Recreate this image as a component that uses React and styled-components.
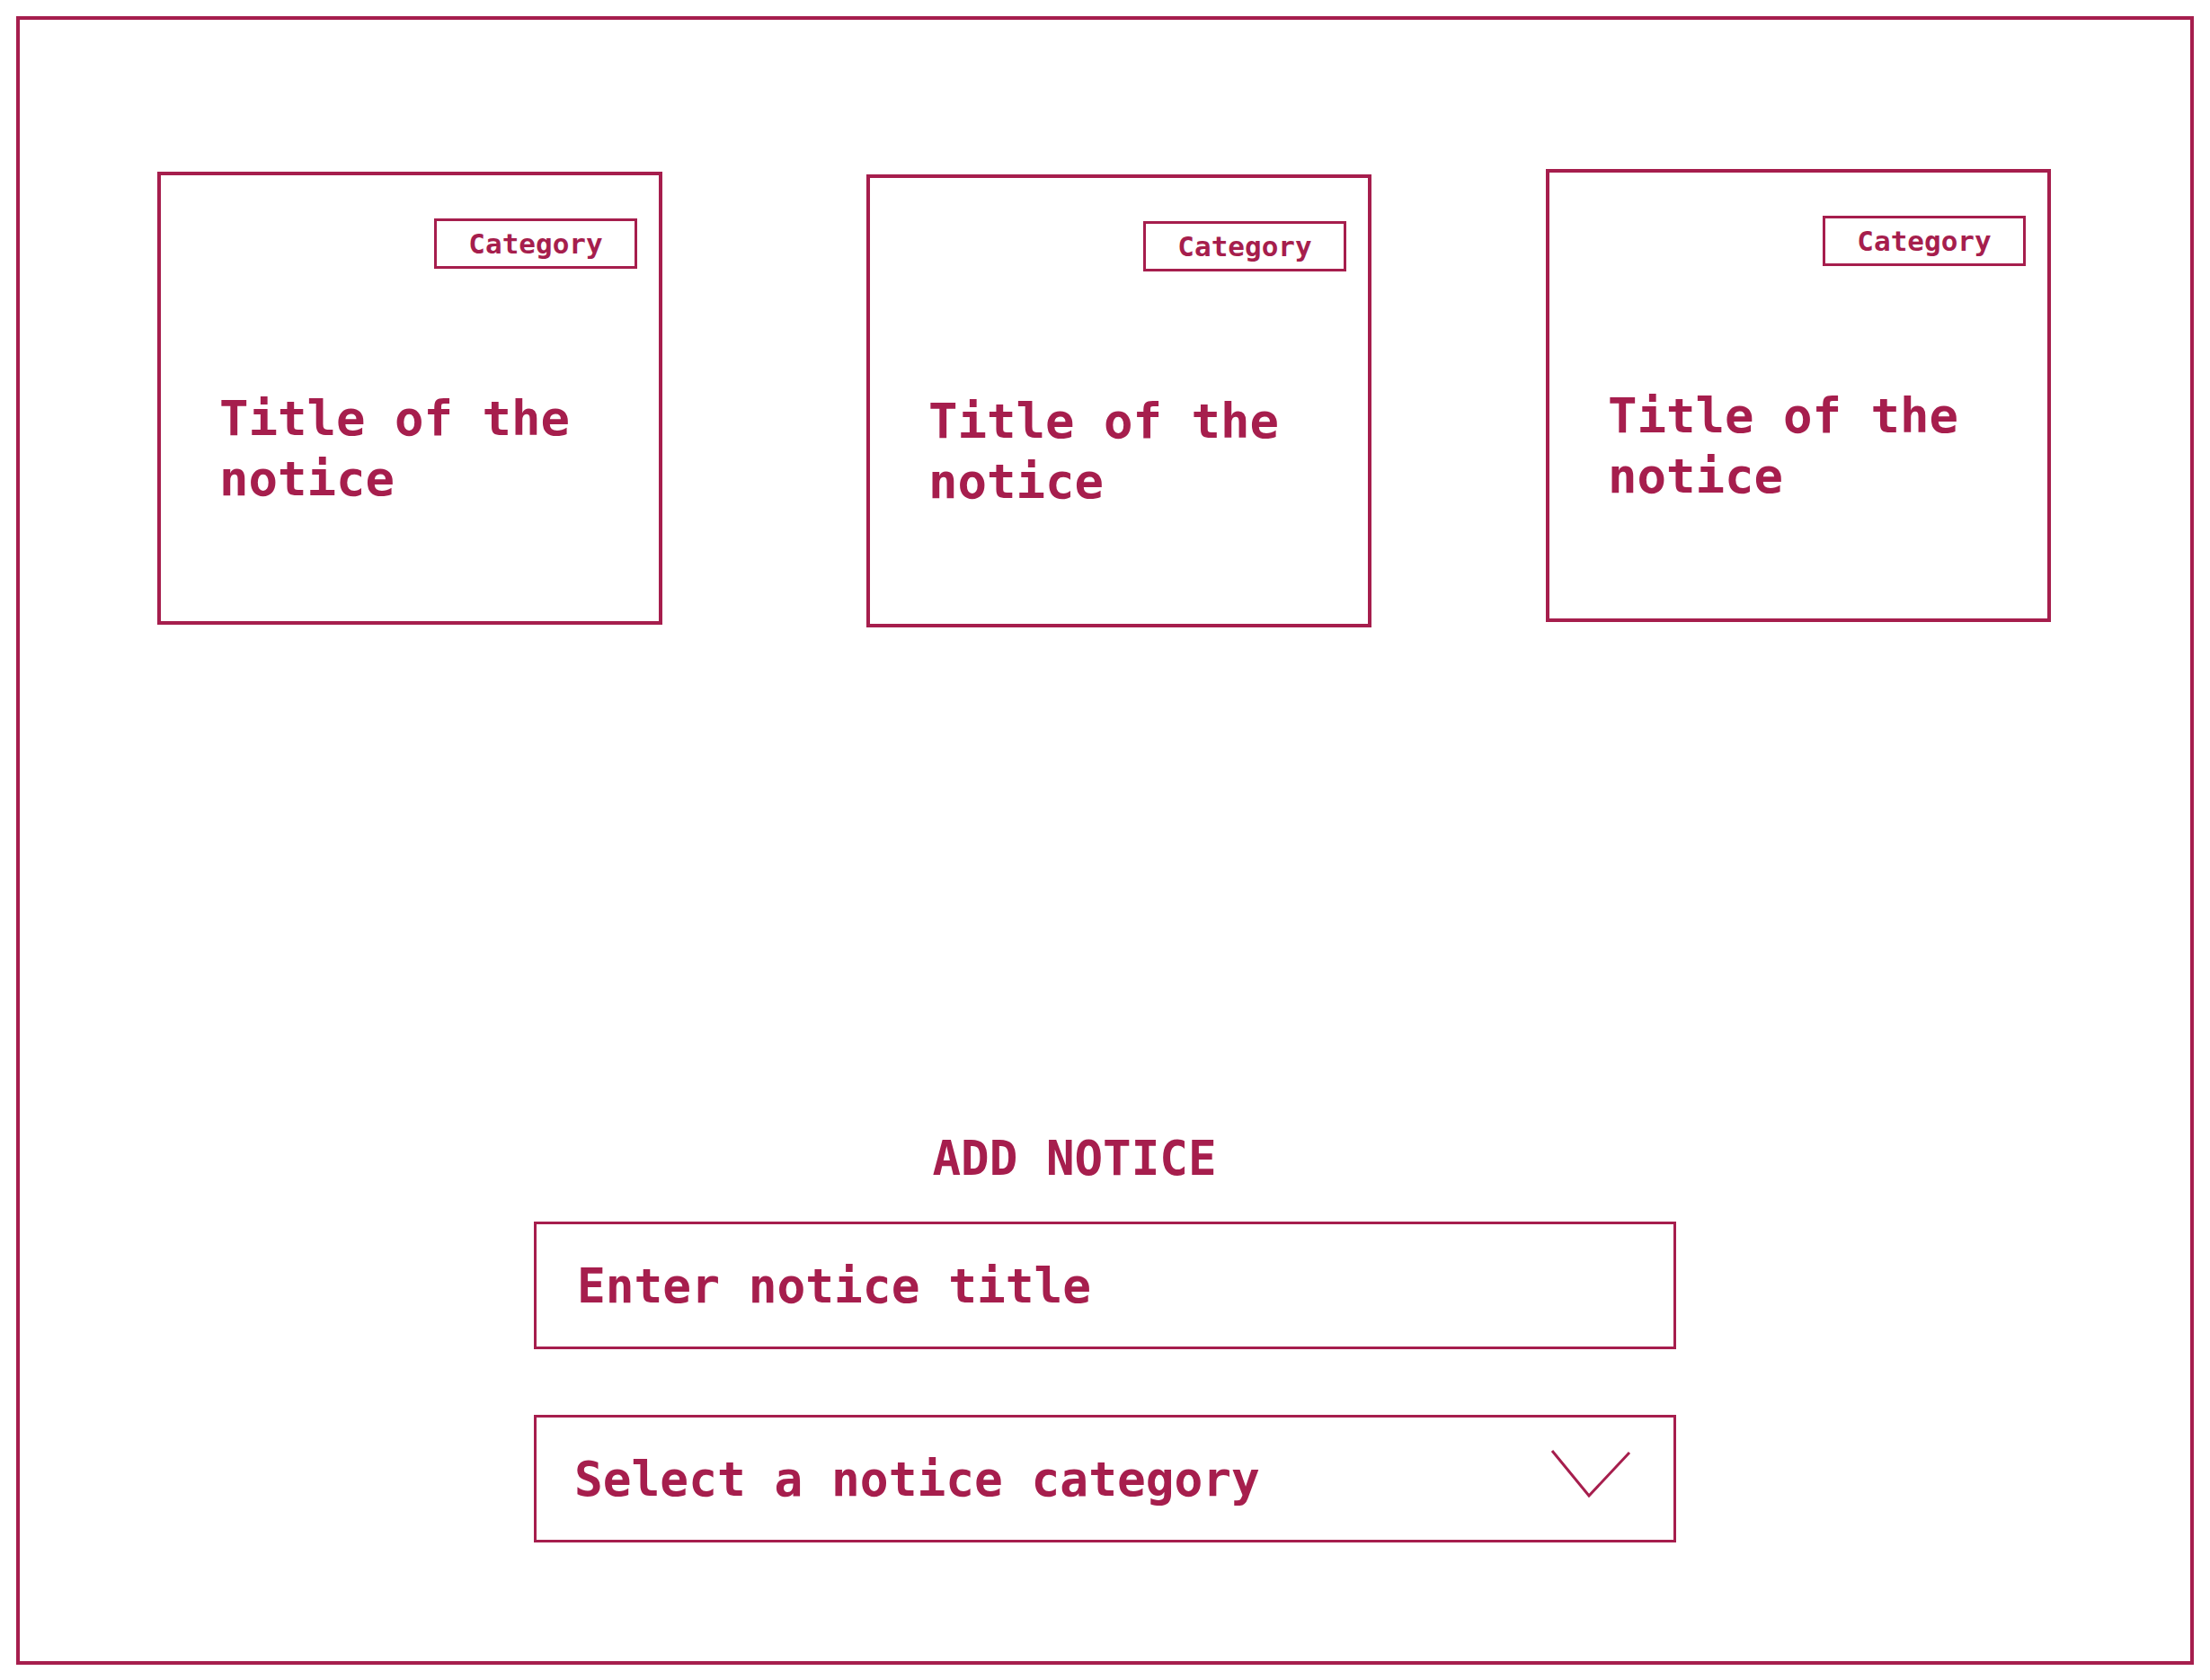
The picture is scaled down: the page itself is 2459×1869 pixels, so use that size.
import React from 'react';
import styled, { createGlobalStyle } from 'styled-components';

const ink = '#a61e4d';

const GlobalStyle = createGlobalStyle`
  html, body {
    margin: 0;
    padding: 0;
    background: #ffffff;
  }
  body {
    font-family: "DejaVu Sans Mono", "Liberation Mono", monospace;
    color: ${ink};
  }
`;

// Styled Components
const Frame = styled.div`
  margin: 18px;
  height: 1834px;
  border: 4px solid ${ink};
  box-sizing: border-box;
`;

const CardRow = styled.div`
  display: flex;
  align-items: flex-start;
  padding: 166px 0 0 153px;
`;

const Card = styled.div`
  width: 562px;
  height: 504px;
  box-sizing: border-box;
  border: 4px solid ${ink};
  margin-top: ${(p) => p.$mt}px;
  margin-left: ${(p) => p.$ml}px;
  padding: 48px 24px 0 65px;
  display: flex;
  flex-direction: column;
`;

const Badge = styled.div`
  align-self: flex-end;
  width: 226px;
  height: 56px;
  box-sizing: border-box;
  border: 3px solid ${ink};
  display: flex;
  align-items: center;
  justify-content: center;
  font-size: 31px;
  font-weight: bold;
`;

const CardTitle = styled.h2`
  margin: 133px 0 0;
  font-size: 54px;
  line-height: 67px;
  font-weight: bold;
`;

const Form = styled.div`
  width: 1271px;
  margin: 560px 0 0 572px;
  display: flex;
  flex-direction: column;
`;

const Heading = styled.h1`
  margin: 0;
  padding-right: 68px;
  text-align: center;
  font-size: 52.5px;
  line-height: 62px;
  font-weight: bold;
`;

const TitleInput = styled.input`
  margin-top: 39px;
  height: 142px;
  box-sizing: border-box;
  border: 3px solid ${ink};
  border-radius: 0;
  padding: 0 0 0 45px;
  outline: none;
  font-family: inherit;
  font-size: 52.8px;
  font-weight: bold;
  color: ${ink};

  &::placeholder {
    color: ${ink};
    opacity: 1;
  }
`;

const SelectBox = styled.div`
  margin-top: 73px;
  height: 142px;
  box-sizing: border-box;
  border: 3px solid ${ink};
  padding: 0 47px 0 42px;
  display: flex;
  align-items: center;
  justify-content: space-between;
  font-size: 52.8px;
  font-weight: bold;
  cursor: pointer;
`;

const Chevron = styled.svg`
  margin-bottom: 12px;
`;

const ChevronIcon = () => (
  <Chevron width="90" height="54" viewBox="0 0 90 54" fill="none" stroke={ink} strokeWidth="3">
    <polyline points="2,2 43,52 88,4" />
  </Chevron>
);

const cards = [
  { mt: 3, ml: 0 },
  { mt: 6, ml: 227 },
  { mt: 0, ml: 194 },
];

const App = () => (
  <>
    <GlobalStyle />
    <Frame>
      <CardRow>
        {cards.map((c, i) => (
          <Card key={i} $mt={c.mt} $ml={c.ml}>
            <Badge>Category</Badge>
            <CardTitle>Title of the notice</CardTitle>
          </Card>
        ))}
      </CardRow>
      <Form>
        <Heading>ADD NOTICE</Heading>
        <TitleInput placeholder="Enter notice title" />
        <SelectBox>
          <span>Select a notice category</span>
          <ChevronIcon />
        </SelectBox>
      </Form>
    </Frame>
  </>
);

export default App;
